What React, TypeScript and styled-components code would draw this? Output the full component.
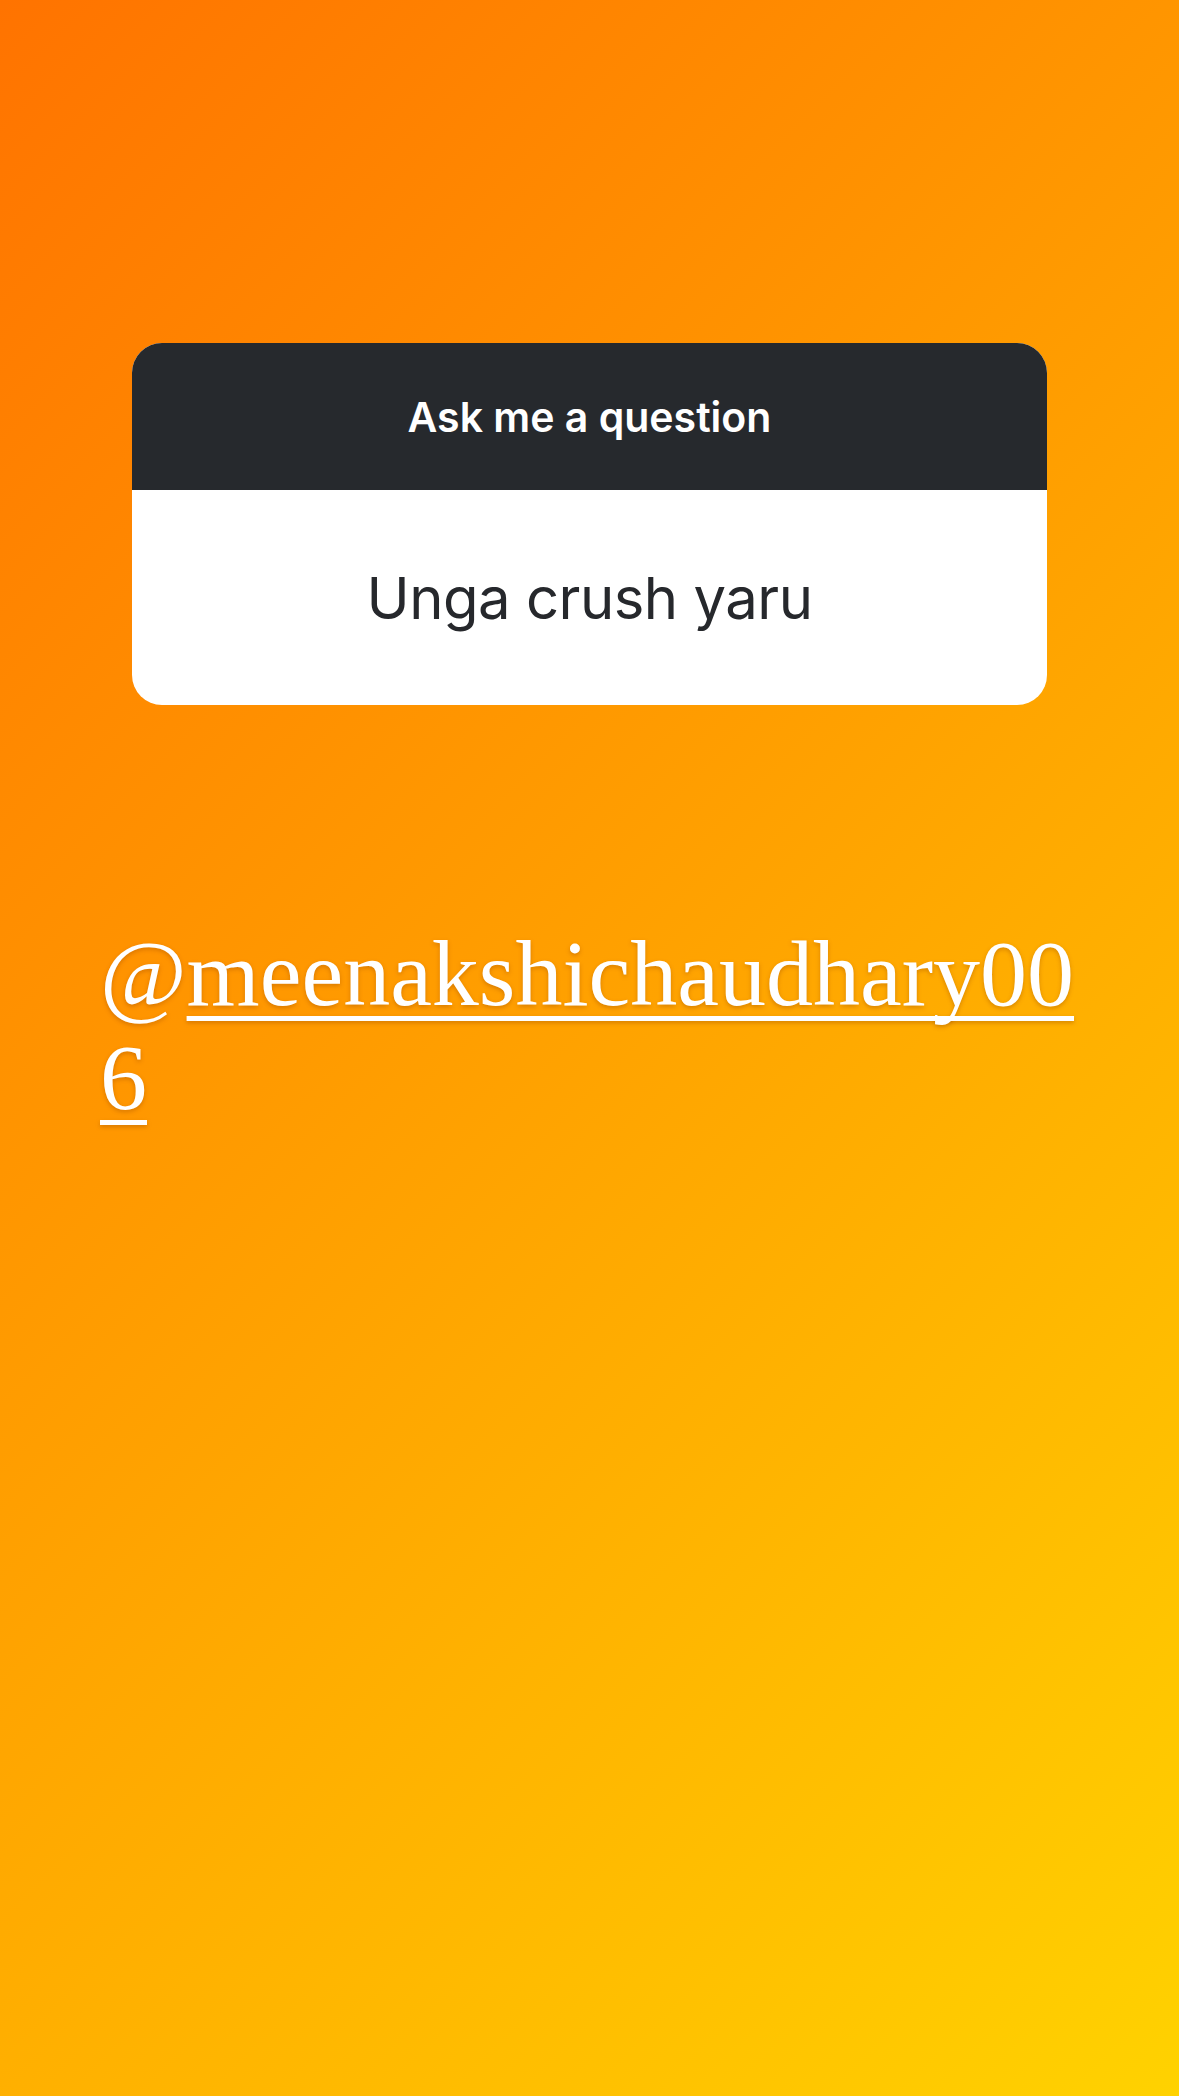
import styled, { createGlobalStyle } from "styled-components";

const GlobalStyle = createGlobalStyle`
  html, body {
    margin: 0;
    padding: 0;
  }
  body {
    font-family: "Inter", "Roboto", sans-serif;
  }
`;

const Story = styled.main`
  min-height: 100vh;
  box-sizing: border-box;
  padding-top: 343px;
  background: linear-gradient(135deg, #ff7300 0%, #ffd200 100%);
  display: flex;
  flex-direction: column;
`;

const QuestionCard = styled.section`
  align-self: center;
  width: 915px;
  border-radius: 30px;
  overflow: hidden;
  background: #ffffff;
  display: flex;
  flex-direction: column;
`;

const Prompt = styled.header`
  height: 147px;
  background: #26292d;
  color: #ffffff;
  display: flex;
  align-items: center;
  justify-content: center;
  font-family: "Inter", sans-serif;
  font-weight: 600;
  font-size: 41px;
`;

const Answer = styled.div`
  height: 215px;
  display: flex;
  align-items: center;
  justify-content: center;
  color: #26282c;
  font-family: "Inter", sans-serif;
  font-weight: 400;
  font-size: 58px;
  letter-spacing: -0.5px;
`;

const Mention = styled.p`
  margin: 216px 0 0 100px;
  width: 990px;
  color: #ffffff;
  font-family: "Liberation Serif", "Times New Roman", serif;
  font-size: 94px;
  line-height: 104px;
  word-break: break-all;
  font-variant-numeric: oldstyle-nums;
  text-shadow: 0 2px 4px rgba(140, 60, 0, 0.35);
`;

// the @ stays plain, only the username is underlined
const Handle = styled.span`
  text-decoration: underline;
  text-decoration-thickness: 5px;
  text-underline-offset: 11px;
  text-decoration-skip-ink: none;
`;

export default function App() {
  return (
    <>
      <GlobalStyle />
      <Story>
        <QuestionCard>
          <Prompt>Ask me a question</Prompt>
          <Answer>Unga crush yaru</Answer>
        </QuestionCard>
        <Mention>
          @<Handle>meenakshichaudhary006</Handle>
        </Mention>
      </Story>
    </>
  );
}
